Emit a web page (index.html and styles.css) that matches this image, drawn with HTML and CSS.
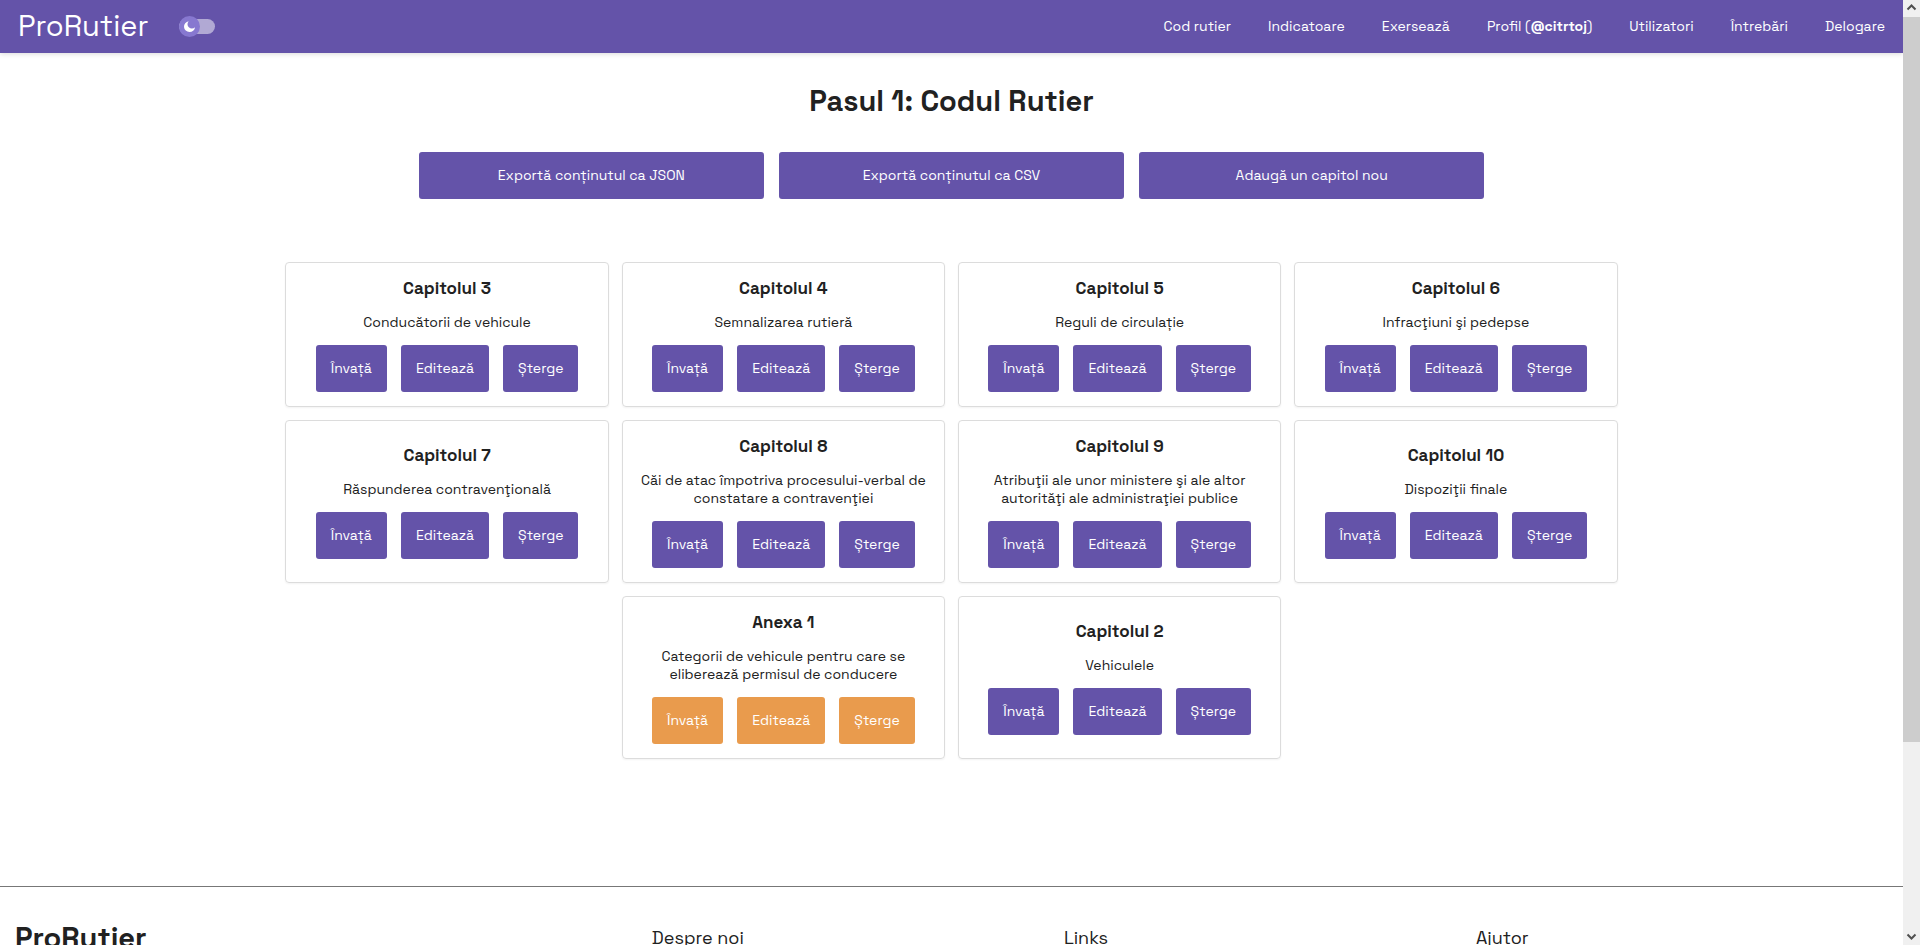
FILE: index.html
```html
<!DOCTYPE html>
<html lang="ro">
<head>
<meta charset="utf-8">
<meta name="viewport" content="width=device-width, initial-scale=1">
<title>ProRutier</title>
<link rel="stylesheet" href="styles.css">
</head>
<body>
<div class="window">
  <div class="page">
    <header class="topbar">
      <a class="logo" href="#">ProRutier</a>
      <label class="theme">
        <input class="theme-input" type="checkbox" aria-label="Mod întunecat">
        <span class="theme-knob">
          <svg class="theme-moon" viewBox="0 0 16 16" aria-hidden="true"><path d="M7 1.4A6.8 6.8 0 1 0 14.8 8.8A4.7 4.7 0 0 1 7 1.4Z"/></svg>
        </span>
      </label>
      <nav class="nav">
        <a href="#">Cod rutier</a>
        <a href="#">Indicatoare</a>
        <a href="#">Exersează</a>
        <a href="#">Profil (<b>@citrtoj</b>)</a>
        <a href="#">Utilizatori</a>
        <a href="#">Întrebări</a>
        <a href="#">Delogare</a>
      </nav>
    </header>

    <main class="content">
      <h1 class="title">Pasul 1: Codul Rutier</h1>
      <div class="actions">
        <button class="btn">Exportă conținutul ca JSON</button>
        <button class="btn">Exportă conținutul ca CSV</button>
        <button class="btn">Adaugă un capitol nou</button>
      </div>

      <section class="chapters">
        <article class="card">
          <h2 class="card-title">Capitolul 3</h2>
          <p class="card-text">Conducătorii de vehicule</p>
          <div class="card-buttons"><button class="btn">Învață</button><button class="btn">Editează</button><button class="btn">Șterge</button></div>
        </article>
        <article class="card">
          <h2 class="card-title">Capitolul 4</h2>
          <p class="card-text">Semnalizarea rutieră</p>
          <div class="card-buttons"><button class="btn">Învață</button><button class="btn">Editează</button><button class="btn">Șterge</button></div>
        </article>
        <article class="card">
          <h2 class="card-title">Capitolul 5</h2>
          <p class="card-text">Reguli de circulație</p>
          <div class="card-buttons"><button class="btn">Învață</button><button class="btn">Editează</button><button class="btn">Șterge</button></div>
        </article>
        <article class="card">
          <h2 class="card-title">Capitolul 6</h2>
          <p class="card-text">Infracţiuni şi pedepse</p>
          <div class="card-buttons"><button class="btn">Învață</button><button class="btn">Editează</button><button class="btn">Șterge</button></div>
        </article>
        <article class="card">
          <h2 class="card-title">Capitolul 7</h2>
          <p class="card-text">Răspunderea contravenţională</p>
          <div class="card-buttons"><button class="btn">Învață</button><button class="btn">Editează</button><button class="btn">Șterge</button></div>
        </article>
        <article class="card">
          <h2 class="card-title">Capitolul 8</h2>
          <p class="card-text">Căi de atac împotriva procesului-verbal de constatare a contravenţiei</p>
          <div class="card-buttons"><button class="btn">Învață</button><button class="btn">Editează</button><button class="btn">Șterge</button></div>
        </article>
        <article class="card">
          <h2 class="card-title">Capitolul 9</h2>
          <p class="card-text">Atribuţii ale unor ministere şi ale altor autorităţi ale administraţiei publice</p>
          <div class="card-buttons"><button class="btn">Învață</button><button class="btn">Editează</button><button class="btn">Șterge</button></div>
        </article>
        <article class="card">
          <h2 class="card-title">Capitolul 10</h2>
          <p class="card-text">Dispoziţii finale</p>
          <div class="card-buttons"><button class="btn">Învață</button><button class="btn">Editează</button><button class="btn">Șterge</button></div>
        </article>
        <article class="card card-annex">
          <h2 class="card-title">Anexa 1</h2>
          <p class="card-text">Categorii de vehicule pentru care se eliberează permisul de conducere</p>
          <div class="card-buttons"><button class="btn">Învață</button><button class="btn">Editează</button><button class="btn">Șterge</button></div>
        </article>
        <article class="card">
          <h2 class="card-title">Capitolul 2</h2>
          <p class="card-text">Vehiculele</p>
          <div class="card-buttons"><button class="btn">Învață</button><button class="btn">Editează</button><button class="btn">Șterge</button></div>
        </article>
      </section>
    </main>

    <footer class="footer">
      <h2 class="footer-brand">ProRutier</h2>
      <h3 class="footer-title">Despre noi</h3>
      <h3 class="footer-title">Links</h3>
      <h3 class="footer-title">Ajutor</h3>
    </footer>
  </div>

  <div class="scrollbar" aria-hidden="true">
    <svg class="scroll-arrow" viewBox="0 0 17 17"><path d="M4.5 9.5L8.5 5.5L12.5 9.5"/></svg>
    <div class="scroll-track"><div class="scroll-thumb"></div></div>
    <svg class="scroll-arrow" viewBox="0 0 17 17"><path d="M4.5 6.5L8.5 10.5L12.5 6.5"/></svg>
  </div>
</div>
</body>
</html>
```

FILE: styles.css
```css
* {
  box-sizing: border-box;
}

body {
  margin: 0;
  color: #212121;
  background: #fff;
  font-family: "Space Grotesk", Inter, "Open Sans", sans-serif;
  font-size: 14px;
  line-height: 18px;
}

h1, h2, h3, p {
  margin: 0;
}

.window {
  display: grid;
  grid-template-columns: minmax(0, 1fr) 17px;
  height: 100vh;
  overflow: hidden;
}

.page {
  overflow: hidden;
}

/* Top bar */
.topbar {
  display: flex;
  align-items: center;
  height: 53px;
  padding: 0 18px;
  background: #6453a9;
  box-shadow: 0 1px 5px rgba(0, 0, 0, 0.15);
}

.topbar a {
  color: #fff;
  text-decoration: none;
}

.logo {
  padding-bottom: 2px;
  font-size: 29px;
  line-height: 36px;
}

.theme {
  display: flex;
  align-items: center;
  width: 36px;
  height: 15px;
  margin-left: 31px;
  border-radius: 8px;
  background: #b1a9d4;
  cursor: pointer;
}

.theme-input {
  position: absolute;
  opacity: 0;
}

.theme-knob {
  display: flex;
  flex: none;
  align-items: center;
  justify-content: center;
  width: 21px;
  height: 21px;
  border-radius: 50%;
  background: #8778d0;
}

.theme-moon {
  width: 13px;
  height: 13px;
  fill: #fff;
}

.nav {
  display: flex;
  gap: 37px;
  margin-left: auto;
  padding-bottom: 2px;
}

/* Buttons */
.btn {
  padding: 14px 15px;
  border: 0;
  border-radius: 3px;
  color: #fff;
  background: #6453a9;
  font: inherit;
  line-height: 19px;
  cursor: pointer;
}

/* Main content */
.content {
  padding: 28px 0 127px;
}

.title {
  font-size: 29px;
  line-height: 40px;
  text-align: center;
}

.actions {
  display: grid;
  grid-template-columns: repeat(3, 1fr);
  gap: 15px;
  width: 56%;
  margin: 31px auto 63px;
}

.chapters {
  display: flex;
  flex-wrap: wrap;
  justify-content: center;
  gap: 13px;
  width: 70%;
  margin: 0 auto;
}

.card {
  display: flex;
  flex: 0 0 calc((100% - 39px) / 4);
  flex-direction: column;
  align-items: center;
  justify-content: center;
  gap: 14px;
  padding: 14px;
  border: 1px solid #dcdcdc;
  border-radius: 4px;
  text-align: center;
  box-shadow: 0 1px 2px rgba(0, 0, 0, 0.05);
}

.card-title {
  font-size: 17px;
  line-height: 22px;
}

.card-buttons {
  display: flex;
  gap: 14px;
}

.card-annex .btn {
  background: #e99b4d;
}

/* Footer */
.footer {
  display: grid;
  grid-template-columns: 17fr 11fr 11fr 11fr;
  align-items: center;
  padding: 31px 15px;
  border-top: 1px solid #777;
}

.footer-brand {
  font-size: 29px;
  line-height: 40px;
}

.footer-title {
  font-size: 18px;
  font-weight: 400;
  line-height: 24px;
}

/* Scrollbar */
.scrollbar {
  display: flex;
  flex-direction: column;
  background: #f0f0f0;
}

.scroll-arrow {
  width: 17px;
  height: 17px;
  fill: none;
  stroke: #505050;
  stroke-width: 2;
}

.scroll-track {
  flex: 1;
}

.scroll-thumb {
  height: 79.6%;
  background: #cdcdcd;
}
```
